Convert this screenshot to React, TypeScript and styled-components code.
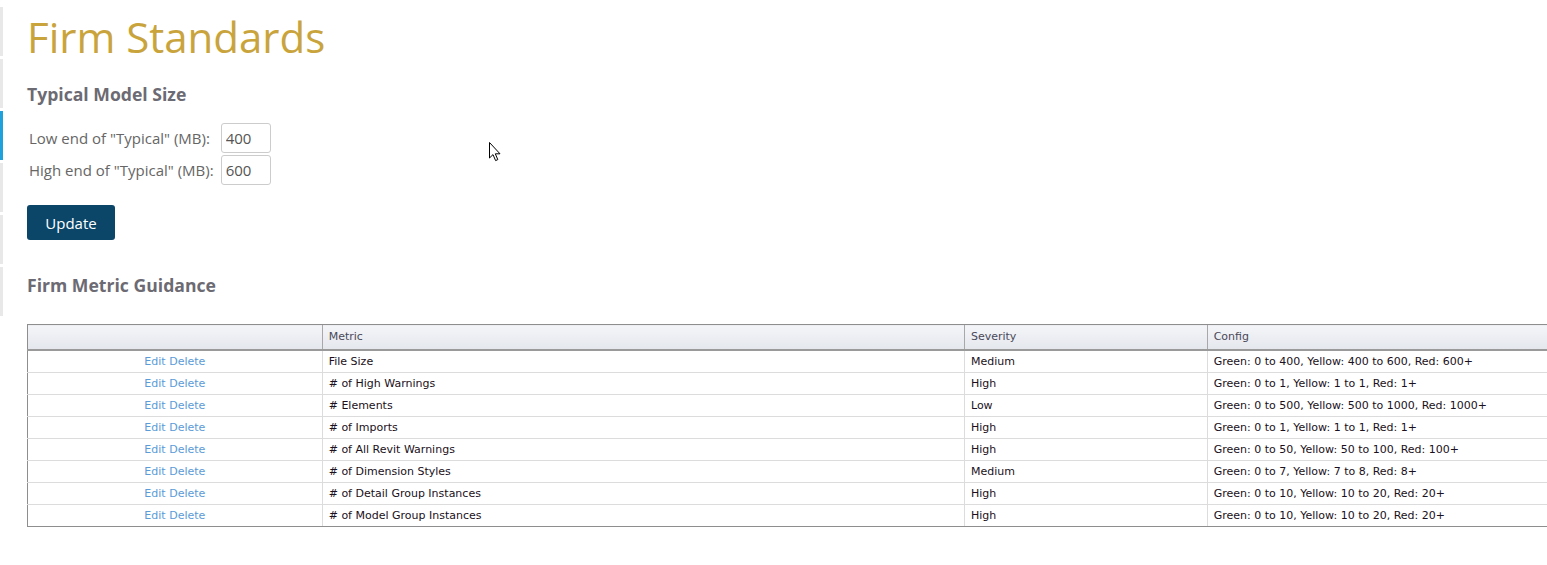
import React from "react";
import styled, { createGlobalStyle } from "styled-components";

const Global = createGlobalStyle`
  html, body { margin: 0; padding: 0; background: #fff; overflow: hidden; }
  body { font-family: "Open Sans", "Liberation Sans", sans-serif; }
`;

const Page = styled.div`
  display: flex;
  align-items: flex-start;
  width: 1700px;
  position: relative;
`;

const SideRail = styled.div`
  display: flex;
  flex-direction: column;
  gap: 3px;
  padding-top: 7px;
  width: 3px;
  flex: none;
`;

const RailTab = styled.div<{ $active?: boolean; $h: number }>`
  height: ${(p) => p.$h}px;
  background: ${(p) => (p.$active ? "#1fa2db" : "#e8e8e8")};
`;

const Main = styled.main`
  padding-left: 24px;
  flex: 1;
`;

const Title = styled.h1`
  margin: 10px 0 0;
  font-size: 42px;
  line-height: 54px;
  font-weight: 400;
  color: #c9a43c;
`;

const SectionHeading = styled.h2<{ $mt: number }>`
  margin: ${(p) => p.$mt}px 0 0;
  font-size: 17.6px;
  line-height: 24px;
  font-weight: 700;
  color: #6c6a72;
`;

const FormGrid = styled.div`
  display: grid;
  grid-template-columns: auto 50px;
  column-gap: 7px;
  row-gap: 2px;
  align-items: center;
  margin-top: 17px;
  justify-content: start;
`;

const Label = styled.label`
  font-size: 15px;
  color: #666;
  padding-left: 2px;
`;

const NumberInput = styled.input`
  box-sizing: border-box;
  width: 50px;
  height: 30px;
  border: 1px solid #ccc;
  border-radius: 3px;
  padding: 0 4px;
  font-family: "Open Sans", sans-serif;
  font-size: 15px;
  color: #555;
  outline: none;
`;

const Button = styled.button`
  margin-top: 20px;
  width: 88px;
  height: 35px;
  border: none;
  border-radius: 3px;
  background: #0b4669;
  color: #fff;
  font-family: "Open Sans", sans-serif;
  font-size: 15px;
  cursor: pointer;
`;

const Table = styled.table`
  margin-top: 27px;
  border-collapse: collapse;
  width: 1600px;
  font-family: "DejaVu Sans", Verdana, sans-serif;
  font-size: 11px;
  border: 1px solid #8e8e8e;
  border-right: none;
`;

const Th = styled.th<{ $w: number }>`
  width: ${(p) => p.$w}px;
  height: 25px;
  padding: 0 6px;
  text-align: left;
  font-weight: 400;
  color: #4a4858;
  background: linear-gradient(#f4f5f8, #e4e7ed);
  border-top: 1px solid #8e8e8e;
  border-bottom: 2px solid #9a9a9a;
  border-left: 1px solid #a8a8a8;
  box-sizing: border-box;
  &:first-child { border-left-color: #8e8e8e; }
`;

const Row = styled.tr`
  &:last-child td { border-bottom-color: #8e8e8e; }
`;

const Td = styled.td<{ $center?: boolean }>`
  height: 21px;
  padding: 0 6px;
  border-bottom: 1px solid #dcdcdc;
  border-left: 1px solid #dcdcdc;
  color: #1a1020;
  text-align: ${(p) => (p.$center ? "center" : "left")};
  white-space: nowrap;
  &:first-child { border-left-color: #8e8e8e; }
`;

const Link = styled.a`
  color: #5a9bd8;
  text-decoration: none;
  cursor: pointer;
`;

const Cursor = styled.svg`
  position: absolute;
  left: 489px;
  top: 142px;
`;

const rows = [
  ["File Size", "Medium", "Green: 0 to 400, Yellow: 400 to 600, Red: 600+"],
  ["# of High Warnings", "High", "Green: 0 to 1, Yellow: 1 to 1, Red: 1+"],
  ["# Elements", "Low", "Green: 0 to 500, Yellow: 500 to 1000, Red: 1000+"],
  ["# of Imports", "High", "Green: 0 to 1, Yellow: 1 to 1, Red: 1+"],
  ["# of All Revit Warnings", "High", "Green: 0 to 50, Yellow: 50 to 100, Red: 100+"],
  ["# of Dimension Styles", "Medium", "Green: 0 to 7, Yellow: 7 to 8, Red: 8+"],
  ["# of Detail Group Instances", "High", "Green: 0 to 10, Yellow: 10 to 20, Red: 20+"],
  ["# of Model Group Instances", "High", "Green: 0 to 10, Yellow: 10 to 20, Red: 20+"],
];

const rail = [
  { h: 49 },
  { h: 49 },
  { h: 49, active: true },
  { h: 49 },
  { h: 49 },
  { h: 49 },
];

export default function App() {
  return (
    <>
      <Global />
      <Page>
        <SideRail>
          {rail.map((r, i) => (
            <RailTab key={i} $h={r.h} $active={r.active} />
          ))}
        </SideRail>
        <Main>
          <Title>Firm Standards</Title>
          <SectionHeading $mt={18}>Typical Model Size</SectionHeading>
          <FormGrid>
            <Label htmlFor="low">Low end of "Typical" (MB):</Label>
            <NumberInput id="low" defaultValue="400" />
            <Label htmlFor="high">High end of "Typical" (MB):</Label>
            <NumberInput id="high" defaultValue="600" />
          </FormGrid>
          <Button>Update</Button>
          <SectionHeading $mt={33}>Firm Metric Guidance</SectionHeading>
          <Table>
            <thead>
              <tr>
                <Th $w={295}></Th>
                <Th $w={643}>Metric</Th>
                <Th $w={243}>Severity</Th>
                <Th $w={420}>Config</Th>
              </tr>
            </thead>
            <tbody>
              {rows.map(([m, s, c]) => (
                <Row key={m}>
                  <Td $center>
                    <Link>Edit</Link> <Link>Delete</Link>
                  </Td>
                  <Td>{m}</Td>
                  <Td>{s}</Td>
                  <Td>{c}</Td>
                </Row>
              ))}
            </tbody>
          </Table>
        </Main>
        <Cursor width="12" height="20" viewBox="0 0 12 20">
          <path
            d="M0.5 0.5 L0.5 16 L4 12.6 L6.6 18.6 L8.8 17.6 L6.3 11.8 L11 11.8 Z"
            fill="#fff"
            stroke="#000"
            strokeWidth="1"
            strokeLinejoin="miter"
          />
        </Cursor>
      </Page>
    </>
  );
}
